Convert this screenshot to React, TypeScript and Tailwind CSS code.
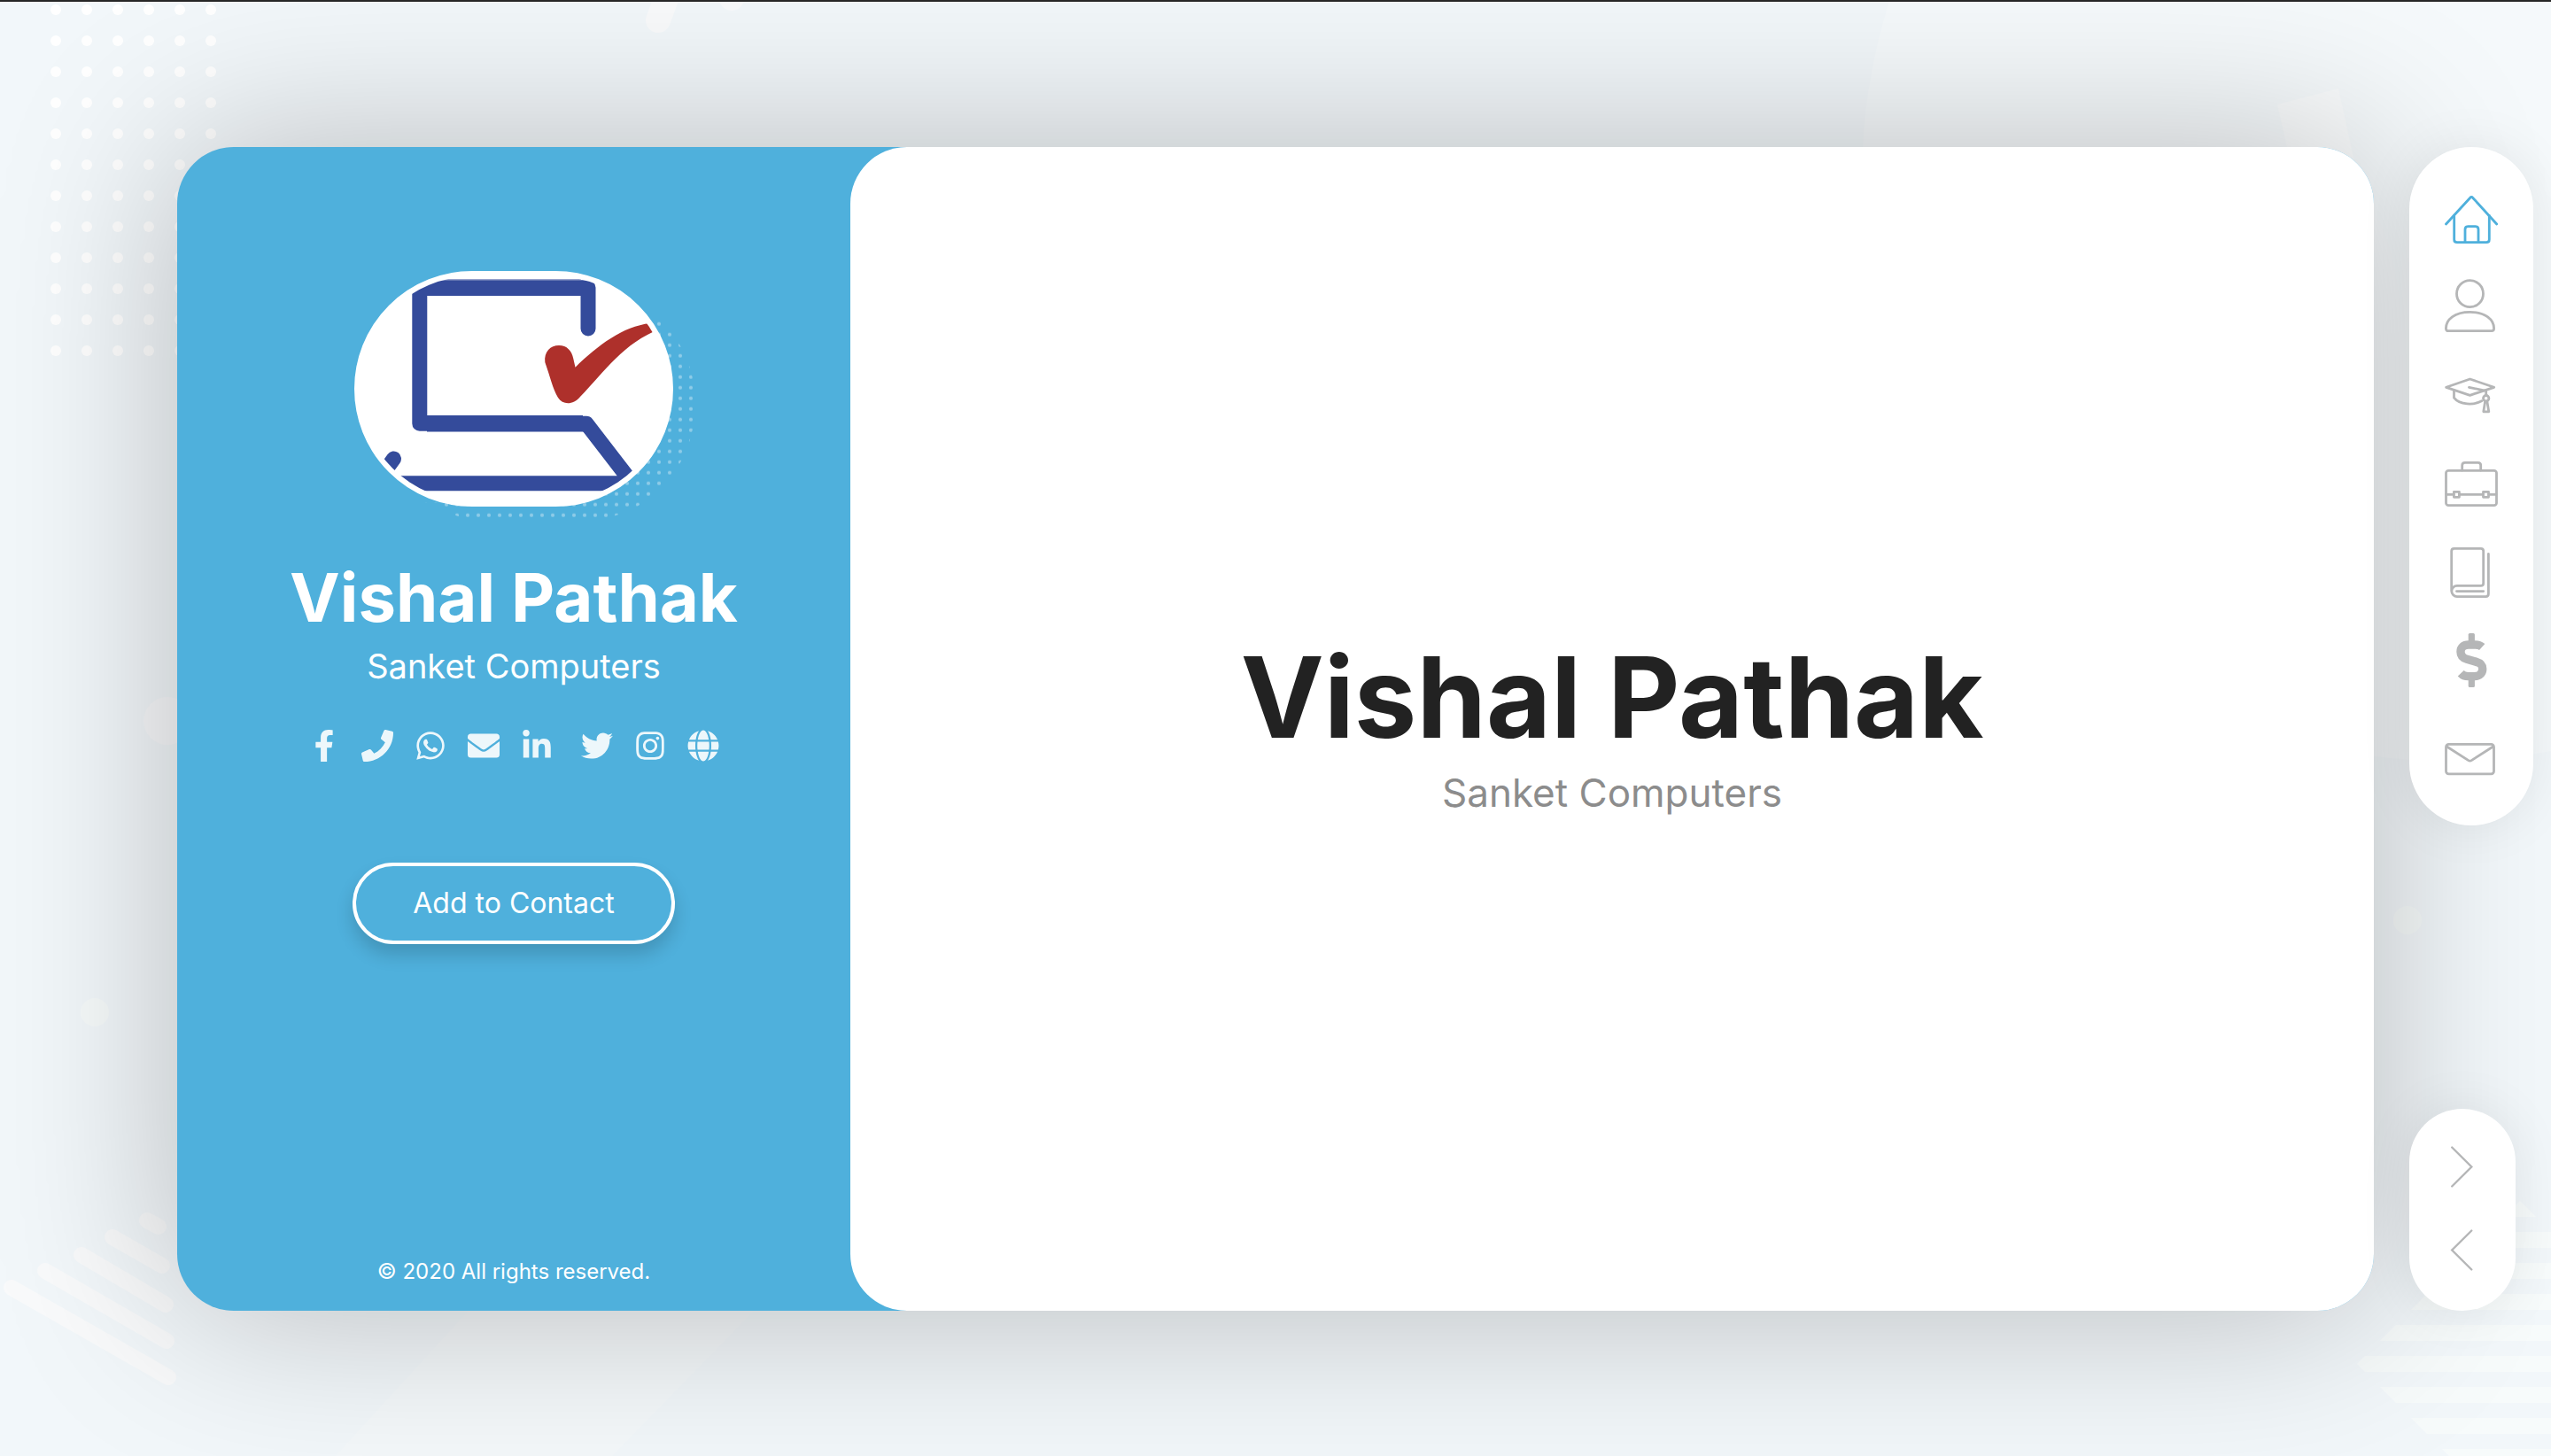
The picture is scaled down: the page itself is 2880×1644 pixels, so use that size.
import React from "react";
import {
  FaFacebookF,
  FaPhone,
  FaWhatsapp,
  FaEnvelope,
  FaLinkedinIn,
  FaTwitter,
  FaInstagram,
  FaGlobe,
} from "react-icons/fa";

const socials = [
  { label: "Facebook", Icon: FaFacebookF },
  { label: "Phone", Icon: FaPhone },
  { label: "WhatsApp", Icon: FaWhatsapp },
  { label: "Email", Icon: FaEnvelope },
  { label: "LinkedIn", Icon: FaLinkedinIn },
  { label: "Twitter", Icon: FaTwitter, spaced: true },
  { label: "Instagram", Icon: FaInstagram },
  { label: "Website", Icon: FaGlobe },
];

const sections = [
  {
    label: "Home",
    active: true,
    art: (
      <>
        <path d="M1.5 37 28.8 7.2Q30.2 5.4 31.6 7.2L58.7 37" />
        <path d="M10.7 27.5V54.5Q10.7 57.7 13.9 57.7H47.1Q50.3 57.7 50.3 54.5V27.5" />
        <path d="M23 57V43Q23 39.7 26.3 39.7H34.7Q38 39.7 38 43V57" />
      </>
    ),
  },
  {
    label: "About",
    art: (
      <>
        <circle cx="28.5" cy="15.7" r="15" />
        <path d="M4 57.7Q1.4 57.7 1.4 54.8C1.4 45 11 36.3 28.5 36.3S55.6 45 55.6 54.8Q55.6 57.7 53 57.7Z" />
      </>
    ),
  },
  {
    label: "Education",
    art: (
      <>
        <path d="M28.5 12 55.7 21.3 28.5 30.3 1.7 21.3Z" />
        <path d="M27.5 21.3 46.7 25.3V30.5" />
        <circle cx="46.7" cy="33.7" r="3.2" />
        <path d="M45.6 37.5 43.8 48.8H49.8L47.9 37.5" />
        <path d="M10.5 24.7V33.2C17 41.6 33 41.6 41.7 36.8" />
      </>
    ),
  },
  {
    label: "Work",
    art: (
      <>
        <rect x="1.5" y="15.3" width="57" height="39.4" rx="2.8" />
        <path d="M19.7 15V9.5Q19.7 6.4 22.8 6.4H37.6Q40.7 6.4 40.7 9.5V15" />
        <path d="M2 42.3H10M17 42.3H43M50 42.3H58" />
        <rect x="10.4" y="39.3" width="6" height="6" />
        <rect x="43.5" y="39.3" width="6" height="6" />
      </>
    ),
  },
  {
    label: "Portfolio",
    art: (
      <>
        <path d="M7.7 51.5V6.3Q7.7 3.4 10.6 3.4H40.8Q43.7 3.4 43.7 6.3V42.5Q43.7 45.4 40.8 45.4H13.9A6.1 6.1 0 0 0 13.9 57.6H46.4Q49.4 57.6 49.4 54.6V9.5" />
        <path d="M13.5 51.6H43.7" />
      </>
    ),
  },
  {
    label: "Pricing",
    art: (
      <>
        <rect x="26.7" y="-1" width="7.2" height="12" rx="1.6" fill="currentColor" stroke="none" />
        <rect x="26.7" y="48" width="7.2" height="12" rx="1.6" fill="currentColor" stroke="none" />
        <path
          strokeWidth="9.4"
          strokeLinecap="butt"
          d="M42.2 14.6C40 12.6 37.4 12 34.4 12H27C21.4 12 18 15 18 20C18 24.6 20.6 27 25 28.3L35 31.1C40 32.6 42.7 34.6 42.7 39.2C42.7 44.4 39 47.6 33.6 47.6H26.4C23 47.6 20.4 46.6 18.2 44.2"
        />
      </>
    ),
  },
  {
    label: "Contact",
    last: true,
    art: (
      <>
        <rect x="1.5" y="13.4" width="54" height="33.4" rx="3" />
        <path d="M2.8 16.2 26.8 31.6Q28.5 32.6 30.2 31.6L54.2 16.2" />
      </>
    ),
  },
];

const dotColumns = [63, 98, 133, 168, 203, 238];
const dotRows = [10, 45, 80, 115, 150, 185, 220, 255, 290, 325, 360, 395];
const stripeTops = [1355, 1390, 1425, 1460, 1495, 1530, 1565, 1600, 1635];

function Backdrop() {
  return (
    <svg
      aria-hidden="true"
      className="absolute inset-0 h-full w-full"
      viewBox="0 0 2880 1644"
      preserveAspectRatio="xMidYMid slice"
    >
      <defs>
        <clipPath id="stripe-clip">
          <path d="M2661 1539 2845 1355 3029 1539 2845 1723Z" />
        </clipPath>
      </defs>
      <circle cx="2760" cy="200" r="658" fill="#f5f9fb" />
      <path d="M528 1480H850L690 1644H378Z" fill="#f4f8fa" />
      <g fill="#ffffff">
        {dotRows.map((y) => dotColumns.map((x) => <circle key={`${x}-${y}`} cx={x} cy={y} r="6" />))}
      </g>
      <g stroke="#f9fafb" strokeLinecap="round" fill="none">
        <path strokeWidth="28" d="M743 22 762 -30M826 -3 840 -40" />
        <path
          strokeWidth="18"
          d="M166 1377 179 1384M127 1396 183 1428M92 1416 187 1472M51 1434 188 1513M13 1453 190 1554"
        />
      </g>
      <path d="M2571 117 2640 99 2662 200H2590Z" fill="#f9fbfc" />
      <circle cx="189" cy="813" r="27" fill="#f8f9fb" />
      <g fill="#f6fafa">
        <circle cx="107" cy="1142" r="16" />
        <circle cx="2718" cy="1038" r="16" />
      </g>
      <g fill="#f7fbfb" clipPath="url(#stripe-clip)">
        {stripeTops.map((y) => (
          <rect key={y} x="2640" y={y} width="240" height="18" />
        ))}
      </g>
    </svg>
  );
}

function Portrait() {
  return (
    <div className="relative h-[266px] w-[360px]">
      <svg aria-hidden="true" className="absolute top-0 left-0 h-[290px] w-[392px]" viewBox="0 0 392 290">
        <defs>
          <pattern id="halo-dots" x="2" y="5.7" width="12" height="12" patternUnits="userSpaceOnUse">
            <circle cx="6" cy="6" r="2.1" fill="#8fcce8" />
          </pattern>
        </defs>
        <path
          d="M80 262H100Q110 281 140 281H262C330 281 385 222 385 150C385 108 367 74 342 54H300Z"
          fill="url(#halo-dots)"
        />
      </svg>
      <div className="relative h-full w-full overflow-hidden rounded-full border-6 border-white bg-white">
        <svg role="img" aria-label="Sanket Computers logo" className="h-full w-full" viewBox="6 6 348 254">
          <g fill="none" stroke="#344b9b" strokeWidth="17" strokeLinejoin="round" strokeLinecap="round">
            <path d="M264 65V18.7H73.8V172.3H262L314 239.7H40" />
            <path d="M44.5 212 30 232" />
          </g>
          <path d="M82 10V9.4H256V10ZM82 26.5H256V28H82ZM82 180H260V181.5H82ZM82 163H258V164.5H82Z" fill="#344b9b" />
          <path
            d="M215.3 103C214 91 221.500 84 231 84C240 84 245.500 90 247.300 99L249.500 108.700C275 84 303 62.500 334 59L346 65C303 82 284 112 255 142C247 151.500 235.500 151.500 230 143C224 133 221 119 215.300 103Z"
            fill="#ae302b"
          />
        </svg>
      </div>
    </div>
  );
}

export default function App() {
  return (
    <div className="relative flex min-h-screen overflow-hidden border-t-2 border-[#262626] bg-[#f2f7fa] pt-[164px] pr-5 pb-[164px] pl-[200px] font-['Inter',sans-serif]">
      <Backdrop />

      <div className="relative flex flex-1 rounded-[64px] bg-[#4fb0dc] shadow-[0_0_200px_rgba(0,0,0,0.25)]">
        <aside className="flex w-[760px] shrink-0 flex-col items-center pt-[140px] pb-[26px] text-white">
          <Portrait />
          <h2 className="mt-[62px] text-[76px] leading-[80px] font-bold">Vishal Pathak</h2>
          <p className="mt-2 text-[38px] leading-[60px]">Sanket Computers</p>
          <ul className="mt-10 flex">
            {socials.map(({ label, Icon, spaced }) => (
              <li key={label} className={spaced ? "ml-2" : ""}>
                <a href="#" aria-label={label} className="flex h-10 w-[60px] items-center justify-center opacity-90">
                  <Icon size={36} />
                </a>
              </li>
            ))}
          </ul>
          <button
            type="button"
            className="mt-[112px] h-[92px] w-[364px] rounded-full border-4 border-white text-[32px] shadow-[0_12px_20px_rgba(0,0,0,0.16)]"
          >
            Add to Contact
          </button>
          <p className="mt-auto text-[24px] leading-9">© 2020 All rights reserved.</p>
        </aside>

        <main className="flex flex-1 flex-col items-center justify-center rounded-[64px] bg-white">
          <h1 className="text-[126px] leading-[144px] font-bold text-[#222222]">Vishal Pathak</h1>
          <p className="text-[44px] leading-[72px] text-[#8c8c8c]">Sanket Computers</p>
        </main>
      </div>

      <div className="relative ml-10 flex w-[140px] shrink-0 flex-col items-start justify-between">
        <nav
          aria-label="Sections"
          className="flex w-[140px] flex-col items-center rounded-full bg-white pt-[30px] pb-[25px] shadow-[0_0_60px_rgba(0,0,0,0.08)]"
        >
          {sections.map(({ label, art, active, last }) => (
            <a
              key={label}
              href={`#${label.toLowerCase()}`}
              aria-label={label}
              className={`flex h-[100px] w-full items-center justify-center ${last ? "mt-[11px]" : ""} ${
                active ? "text-[#4fb0dc]" : "text-[#b5b6b7]"
              }`}
            >
              <svg
                viewBox="0 0 60 60"
                className="h-[60px] w-[60px] overflow-visible"
                fill="none"
                stroke="currentColor"
                strokeWidth="2.8"
                strokeLinecap="round"
                strokeLinejoin="round"
              >
                {art}
              </svg>
            </a>
          ))}
        </nav>

        <div className="flex w-[120px] flex-col items-center rounded-full bg-white pt-[18px] pb-[22px] text-[#b5b6b7] shadow-[0_0_60px_rgba(0,0,0,0.08)]">
          <button type="button" aria-label="Next" className="flex h-[94px] w-full items-center justify-center">
            <svg viewBox="0 0 60 60" className="h-[60px] w-[60px]" fill="none" stroke="currentColor" strokeWidth="2.4" strokeLinecap="round">
              <path d="M18.200 8.500 40.300 30.500 18.200 52.500" />
            </svg>
          </button>
          <button type="button" aria-label="Previous" className="flex h-[94px] w-full items-center justify-center">
            <svg viewBox="0 0 60 60" className="h-[60px] w-[60px]" fill="none" stroke="currentColor" strokeWidth="2.4" strokeLinecap="round">
              <path d="M40.300 8.500 18.200 30.500 40.300 52.500" />
            </svg>
          </button>
        </div>
      </div>
    </div>
  );
}
